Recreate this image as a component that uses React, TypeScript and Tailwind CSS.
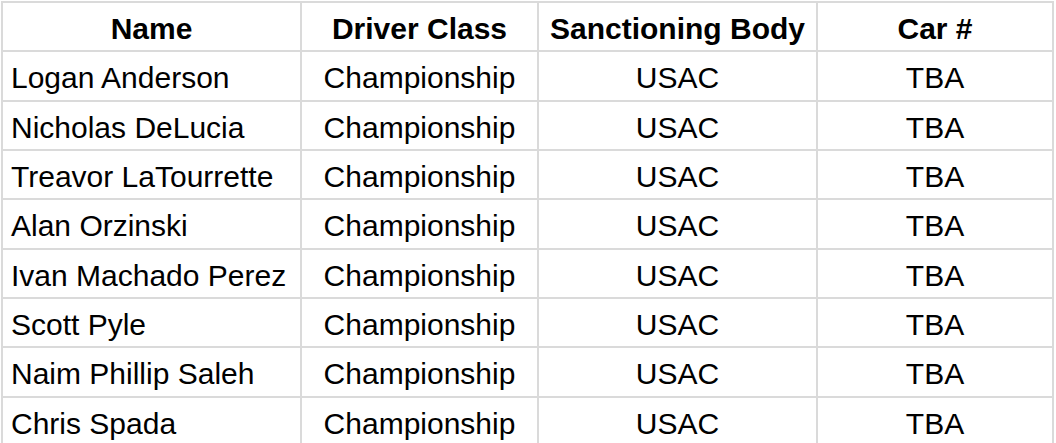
import React from 'react';

const drivers = [
  'Logan Anderson',
  'Nicholas DeLucia',
  'Treavor LaTourrette',
  'Alan Orzinski',
  'Ivan Machado Perez',
  'Scott Pyle',
  'Naim Phillip Saleh',
  'Chris Spada',
];

const cell = 'border-2 border-[#dadada] px-2 pt-[5px] pb-0';

export default function App() {
  return (
    <div className="min-h-screen bg-white pl-px pt-px font-['Liberation_Sans',Arial,sans-serif]">
      <table className="w-[1053px] table-fixed border-collapse text-[30px] leading-[34px] text-black">
        <colgroup>
          <col className="w-[299px]" />
          <col className="w-[237px]" />
          <col className="w-[279px]" />
          <col className="w-[236px]" />
        </colgroup>
        <thead>
          <tr className="h-[49.33px]">
            <th className={`${cell} text-center font-bold`}>Name</th>
            <th className={`${cell} text-center font-bold`}>Driver Class</th>
            <th className={`${cell} text-center font-bold`}>Sanctioning Body</th>
            <th className={`${cell} text-center font-bold`}>Car #</th>
          </tr>
        </thead>
        <tbody>
          {drivers.map((name) => (
            <tr key={name} className="h-[49.33px]">
              <td className={`${cell} text-left`}>{name}</td>
              <td className={`${cell} text-center`}>Championship</td>
              <td className={`${cell} text-center`}>USAC</td>
              <td className={`${cell} text-center`}>TBA</td>
            </tr>
          ))}
        </tbody>
      </table>
    </div>
  );
}
